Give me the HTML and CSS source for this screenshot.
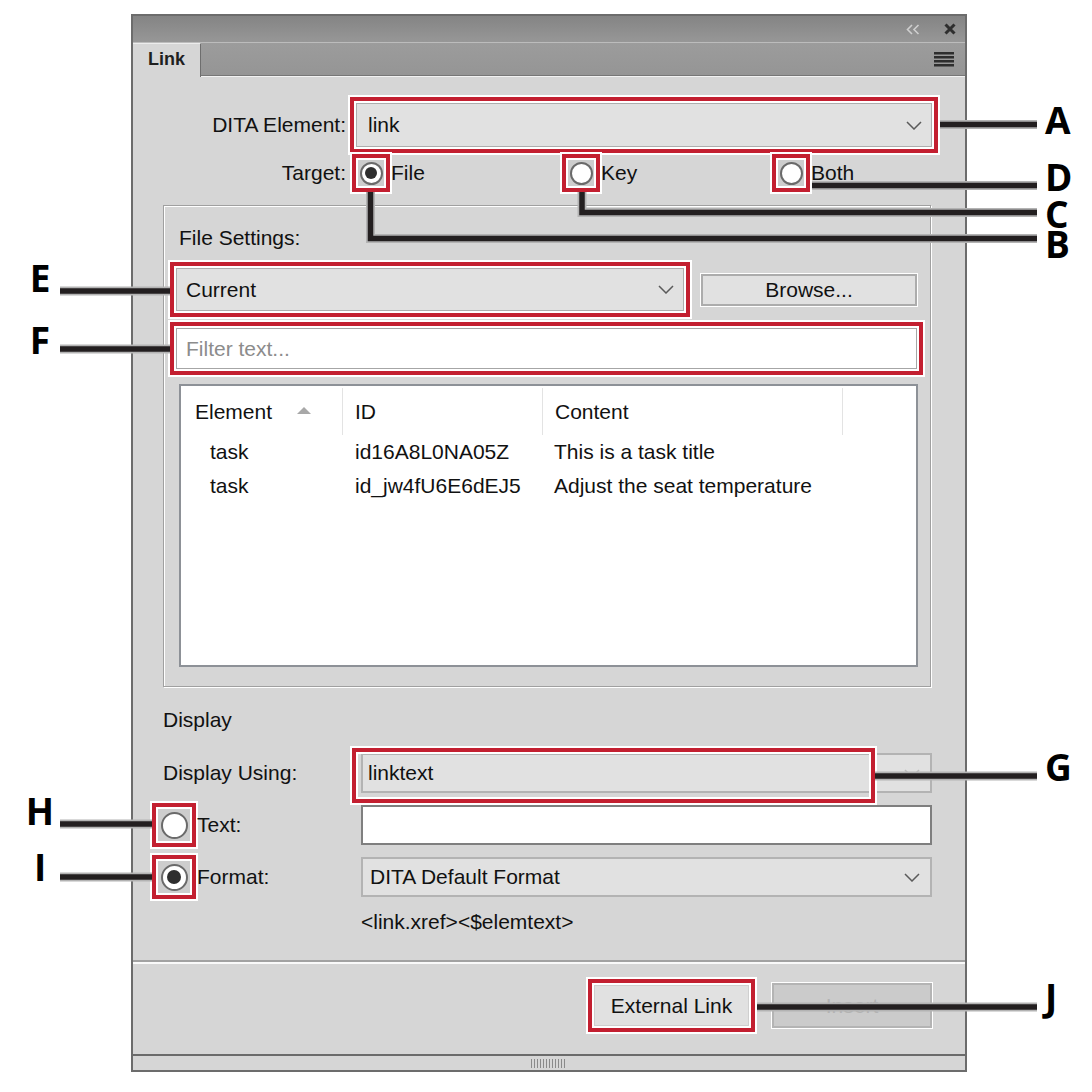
FILE: index.html
```html
<!DOCTYPE html>
<html lang="en">
<head>
<meta charset="utf-8">
<title>Link</title>
<link rel="stylesheet" href="styles.css">
</head>
<body>
<div class="page">
  <div class="panel">
    <div class="titlebar">
      <svg class="ico-collapse" width="14" height="11" viewBox="0 0 14 11"><path d="M6 1 L1.5 5.5 L6 10 M12.5 1 L8 5.5 L12.5 10" fill="none" stroke="#cfcfcf" stroke-width="1.6"/></svg>
      <svg class="ico-close" width="12" height="12" viewBox="0 0 12 12"><path d="M1.5 1.5 L10.5 10.5 M10.5 1.5 L1.5 10.5" fill="none" stroke="#2e2e2e" stroke-width="3"/></svg>
    </div>
    <div class="tabrow">
      <div class="tab">Link</div>
      <div class="tabfill">
        <svg class="ico-menu" width="20" height="15" viewBox="0 0 20 15"><rect x="0" y="0" width="20" height="2.5" fill="#2e2e2e"/><rect x="0" y="4" width="20" height="2.5" fill="#2e2e2e"/><rect x="0" y="8" width="20" height="2.5" fill="#2e2e2e"/><rect x="0" y="12" width="20" height="2.5" fill="#2e2e2e"/></svg>
      </div>
    </div>
    <div class="body">
      <div class="row-top">
        <div class="lbl-r">DITA Element:</div>
        <div class="select sel-dita hl"><span>link</span><svg class="chev" width="16" height="9" viewBox="0 0 16 9"><path d="M1 1 L8 8 L15 1" fill="none" stroke="#5a5a5a" stroke-width="1.5"/></svg></div>
      </div>
      <div class="row-target">
        <div class="lbl-r">Target:</div>
        <div class="opts">
          <div class="opt"><span class="rbox hl"><span class="radio on"></span></span><span>File</span></div>
          <div class="opt"><span class="rbox hl"><span class="radio"></span></span><span>Key</span></div>
          <div class="opt"><span class="rbox hl"><span class="radio"></span></span><span>Both</span></div>
        </div>
      </div>
      <div class="group">
        <div class="group-title">File Settings:</div>
        <div class="row-file">
          <div class="select sel-file hl"><span>Current</span><svg class="chev" width="16" height="9" viewBox="0 0 16 9"><path d="M1 1 L8 8 L15 1" fill="none" stroke="#5a5a5a" stroke-width="1.5"/></svg></div>
          <div class="btn btn-browse">Browse...</div>
        </div>
        <div class="filter hl">Filter text...</div>
        <div class="list">
          <div class="list-head">
            <div class="col c1"><span>Element</span><span class="sort"></span></div>
            <div class="col c2">ID</div>
            <div class="col c3">Content</div>
          </div>
          <div class="list-row">
            <div class="col c1 indent">task</div>
            <div class="col c2">id16A8L0NA05Z</div>
            <div class="col c3">This is a task title</div>
          </div>
          <div class="list-row">
            <div class="col c1 indent">task</div>
            <div class="col c2">id_jw4fU6E6dEJ5</div>
            <div class="col c3">Adjust the seat temperature</div>
          </div>
        </div>
      </div>
      <div class="display">
        <div class="section-title">Display</div>
        <div class="drow first">
          <div class="dlabel">Display Using:</div>
          <div class="dctl">
            <div class="select sel-disp"><span>linktext</span><svg class="chev" width="16" height="9" viewBox="0 0 16 9"><path d="M1 1 L8 8 L15 1" fill="none" stroke="#bdbdbd" stroke-width="1.5"/></svg></div>
            <div class="hl-over"></div>
          </div>
        </div>
        <div class="drow">
          <div class="dlabel rad"><span class="rbox rbig hl"><span class="radio"></span></span><span>Text:</span></div>
          <div class="textbox"></div>
        </div>
        <div class="drow">
          <div class="dlabel rad"><span class="rbox rbig hl"><span class="radio on"></span></span><span>Format:</span></div>
          <div class="select sel-fmt"><span>DITA Default Format</span><svg class="chev" width="16" height="9" viewBox="0 0 16 9"><path d="M1 1 L8 8 L15 1" fill="none" stroke="#5a5a5a" stroke-width="1.5"/></svg></div>
        </div>
        <div class="hint">&lt;link.xref&gt;&lt;$elemtext&gt;</div>
      </div>
      <div class="sep"></div>
      <div class="footer">
        <div class="btn btn-ext hl">External Link</div>
        <div class="btn btn-insert">Insert</div>
      </div>
    </div>
    <div class="grip"><span class="grip-lines"></span></div>
  </div>

  <svg class="callouts" width="1092" height="1092" viewBox="0 0 1092 1092">
    <defs>
      <path id="cA" d="M940 124.5 H1037"/>
      <path id="cB" d="M370.5 192 V238.5 H1037"/>
      <path id="cC" d="M582 192 V212.5 H1037"/>
      <path id="cD" d="M812 185.5 H1037"/>
      <path id="cE" d="M60 291 H170"/>
      <path id="cF" d="M60 349 H170"/>
      <path id="cG" d="M875 776 H1037"/>
      <path id="cH" d="M60 824 H152"/>
      <path id="cI" d="M60 877 H152"/>
      <path id="cJ" d="M757 1007 H1037"/>
    </defs>
    <g fill="none" stroke="#b3b3b3" stroke-width="9">
      <use href="#cA"/><use href="#cB"/><use href="#cC"/><use href="#cD"/><use href="#cE"/>
      <use href="#cF"/><use href="#cG"/><use href="#cH"/><use href="#cI"/><use href="#cJ"/>
    </g>
    <g fill="none" stroke="#231f20" stroke-width="5.5">
      <use href="#cA"/><use href="#cB"/><use href="#cC"/><use href="#cD"/><use href="#cE"/>
      <use href="#cF"/><use href="#cG"/><use href="#cH"/><use href="#cI"/><use href="#cJ"/>
    </g>
  </svg>
  <span class="letter right lt-a">A</span>
  <span class="letter right lt-b">B</span>
  <span class="letter right lt-c">C</span>
  <span class="letter right lt-d">D</span>
  <span class="letter left lt-e">E</span>
  <span class="letter left lt-f">F</span>
  <span class="letter right lt-g">G</span>
  <span class="letter left lt-h">H</span>
  <span class="letter left lt-i">I</span>
  <span class="letter right lt-j">J</span>
</div>
</body>
</html>
```

FILE: styles.css
```css
* { box-sizing: border-box; }
html, body { margin: 0; padding: 0; background: #fff; }
body {
  font-family: "Liberation Sans", Arial, sans-serif;
  font-size: 21px;
  color: #111;
}
.page {
  position: relative;
  width: 1092px;
  height: 1092px;
  padding: 14px 0 0 131px;
  overflow: hidden;
}
.panel {
  width: 836px;
  height: 1058px;
  border: 2px solid #6c6c6c;
  display: flex;
  flex-direction: column;
  background: #d6d6d6;
}

/* title bar */
.titlebar {
  height: 27px;
  flex: none;
  border-bottom: 1px solid #bcbcbc;
  background: linear-gradient(#848484, #979797);
  display: flex;
  align-items: center;
  justify-content: flex-end;
  gap: 24px;
  padding-right: 9px;
}
.ico-collapse, .ico-close { display: block; }

/* tabs */
.tabrow { height: 34px; flex: none; display: flex; }
.tab {
  width: 68px;
  background: #d6d6d6;
  border-top: 1px solid #ececec;
  border-right: 1px solid #6e6e6e;
  font-weight: bold;
  font-size: 18px;
  line-height: 31px;
  padding-left: 15px;
  color: #1f1f1f;
}
.tabfill {
  flex: 1;
  background: linear-gradient(to bottom, #9c9c9c 0, #959595 32px, #777 32px, #777 33px, #f2f2f2 33px);
  display: flex;
  align-items: center;
  justify-content: flex-end;
  padding: 0 11px 2px 0;
}
.ico-menu { display: block; }

/* body */
.body { flex: 1; display: flex; flex-direction: column; }

.hl { box-shadow: 0 0 0 2px #fff, 0 0 0 6px #c31f30, 0 0 0 8px #fff; }

.select {
  display: flex;
  align-items: center;
  justify-content: space-between;
  background: #e1e1e1;
  border: 1px solid #adadad;
  padding: 0 9px 0 11px;
  color: #111;
}
.chev { display: block; flex: none; }

.row-top { display: flex; align-items: center; height: 44px; margin-top: 26px; }
.lbl-r { width: 213px; text-align: right; flex: none; }
.sel-dita { margin-left: 10px; width: 576px; height: 44px; }

.row-target { display: flex; align-items: center; height: 26px; margin-top: 13px; }
.opts { display: flex; margin-left: 12px; }
.opt { width: 210px; display: flex; align-items: center; gap: 7px; }

.rbox {
  width: 26px;
  height: 26px;
  flex: none;
  background: #cdcdcd;
  display: flex;
  align-items: center;
  justify-content: center;
}
.radio {
  width: 23px;
  height: 23px;
  border-radius: 50%;
  border: 2px solid #6a6a6a;
  background: #fff;
  display: flex;
  align-items: center;
  justify-content: center;
}
.radio.on::after {
  content: "";
  width: 12px;
  height: 12px;
  border-radius: 50%;
  background: #2e2e2e;
}
.rbig { width: 32px; height: 32px; }
.rbig .radio { width: 27px; height: 27px; }
.rbig .radio.on::after { width: 14px; height: 14px; }

/* File settings group */
.group {
  margin: 19px 0 0 30px;
  width: 768px;
  height: 482px;
  flex: none;
  border: 1px solid #a0a0a0;
  box-shadow: inset 1px 1px 0 #fff, 1px 1px 0 #fff;
  padding: 20px 0 0 12px;
}
.group-title { line-height: 24px; margin-left: 3px; }
.row-file { display: flex; align-items: center; margin-top: 18px; }
.sel-file { width: 508px; height: 43px; padding-left: 9px; }
.btn {
  display: flex;
  align-items: center;
  justify-content: center;
  background: #e1e1e1;
  color: #111;
}
.btn-browse {
  margin-left: 17px;
  width: 216px;
  height: 32px;
  border: 2px solid #acacac;
  box-shadow: 0 0 0 1px #fff;
}
.filter {
  margin-top: 17px;
  width: 741px;
  height: 41px;
  background: #fff;
  border: 1px solid #a6a6a6;
  color: #8c8c8c;
  padding-left: 9px;
  display: flex;
  align-items: center;
}
.list {
  margin: 15px 0 0 3px;
  width: 739px;
  height: 283px;
  border: 2px solid #8d9197;
  background: #fff;
}
.list-head { display: flex; margin-top: 2px; height: 47px; }
.list-head .col { border-right: 1px solid #e3e3e3; height: 47px; display: flex; align-items: center; }
.list-row { display: flex; height: 34px; align-items: center; }
.col { flex: none; }
.c1 { width: 162px; padding-left: 14px; }
.c2 { width: 200px; padding-left: 12px; }
.c3 { width: 300px; padding-left: 11px; }
.list-head .c1 { padding-right: 31px; justify-content: space-between; }
.list-head .c3 { padding-left: 12px; }
.c1.indent { padding-left: 29px; }
.sort {
  width: 0;
  height: 0;
  border-left: 7px solid transparent;
  border-right: 7px solid transparent;
  border-bottom: 7px solid #a8a8a8;
  margin-top: -2px;
}

/* Display section */
.display { margin-left: 25px; }
.section-title { margin: 21px 0 0 5px; line-height: 24px; }
.drow { display: flex; align-items: center; height: 40px; margin-top: 12px; }
.drow.first { margin-top: 21px; }
.dlabel { width: 203px; flex: none; display: flex; align-items: center; gap: 7px; padding-left: 5px; }
.dlabel.rad { padding-left: 0; }
.dctl { position: relative; width: 571px; height: 40px; }
.sel-disp { width: 100%; height: 40px; border: 2px solid #b3b3b3; padding: 0 10px 0 5px; }
.hl-over {
  position: absolute;
  left: -9px;
  top: -5px;
  width: 523px;
  height: 55px;
  border: 4px solid #c31f30;
  box-shadow: 0 0 0 2px #fff, inset 0 0 0 2px #fff;
}
.textbox { width: 571px; height: 40px; background: #fff; border: 2px solid #7f7f7f; }
.sel-fmt { width: 571px; height: 40px; border: 2px solid #b3b3b3; padding: 0 10px 0 7px; }
.hint { margin: 13px 0 0 203px; line-height: 24px; }

.sep { margin-top: 26px; border-top: 2px solid #a2a2a2; border-bottom: 2px solid #fafafa; }

.footer {
  display: flex;
  justify-content: flex-end;
  align-items: center;
  height: 65px;
  padding: 18px 33px 0 0;
}
.btn-ext { width: 155px; height: 41px; border: 1px solid #cfcfcf; }
.btn-insert {
  margin-left: 23px;
  width: 160px;
  height: 45px;
  background: #cbcbcb;
  border: 2px solid #b4b4b4;
  box-shadow: 0 0 0 1px #fff;
  color: #b3b3b3;
}

/* bottom grip */
.grip {
  height: 16px;
  flex: none;
  border-top: 2px solid #6b6b6b;
  display: flex;
  align-items: center;
  justify-content: center;
}
.grip-lines {
  width: 36px;
  height: 9px;
  background: repeating-linear-gradient(90deg, #8a8a8a 0, #8a8a8a 1px, transparent 1px, transparent 3px);
}

/* callouts overlay */
.callouts { position: absolute; left: 0; top: 0; pointer-events: none; }
.letter {
  position: absolute;
  font-family: "Open Sans", "Liberation Sans", sans-serif;
  font-weight: 700;
  font-size: 37px;
  line-height: 28px;
  height: 28px;
  color: #000;
}
.letter.right { left: 1045px; }
.letter.left { left: 20px; width: 40px; text-align: center; }
.lt-a { top: 106px; }
.lt-b { top: 230px; }
.lt-c { top: 200px; }
.lt-d { top: 163px; }
.lt-e { top: 264px; }
.lt-f { top: 326px; }
.lt-g { top: 753px; }
.lt-h { top: 797px; }
.lt-i { top: 853px; }
.lt-j { top: 983px; }
```
